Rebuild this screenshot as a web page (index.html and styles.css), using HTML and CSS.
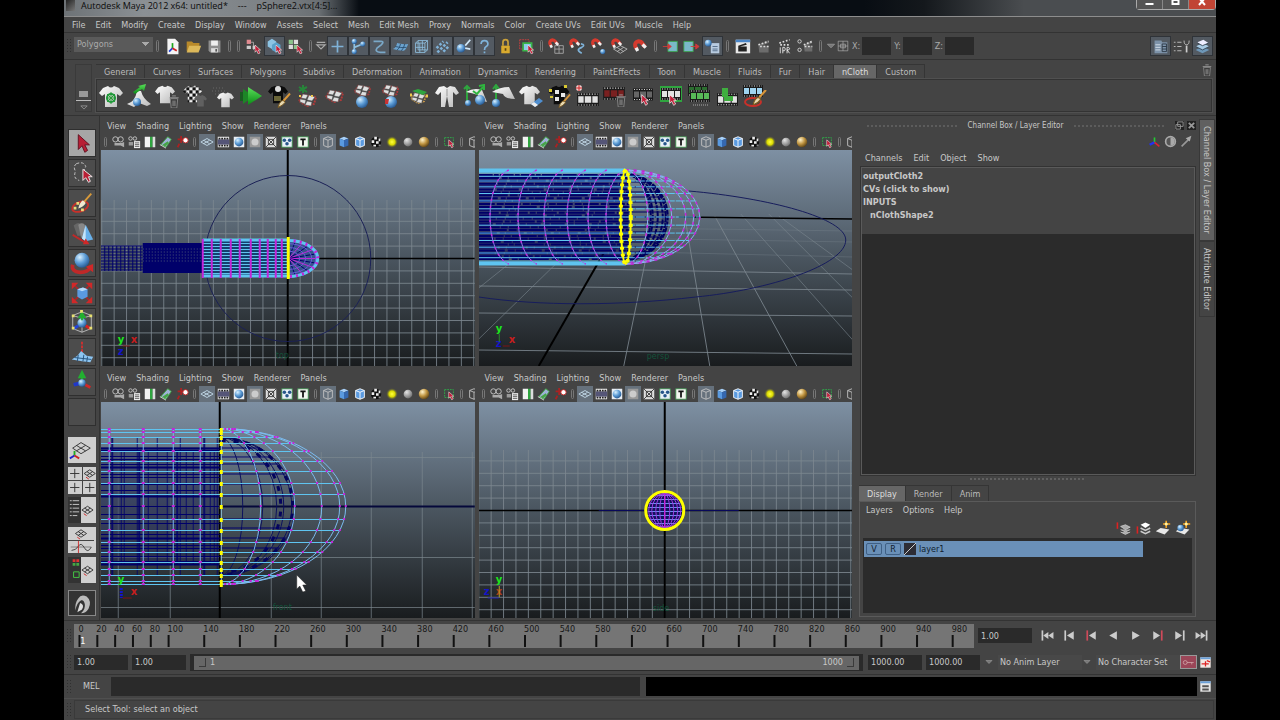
FILE: index.html
```html
<!doctype html>
<html lang="en">
<head>
    <meta charset="utf-8">
    <title>Autodesk Maya 2012 x64: untitled*</title>
    <link rel="stylesheet" href="styles.css">
</head>
<body>
<!-- Shared icon shapes -->
<svg class="sprite" aria-hidden="true">
    <defs>
        <radialGradient id="gBlue" cx=".35" cy=".3" r=".8"><stop offset="0" stop-color="#d8f0ff"/><stop offset=".5" stop-color="#5b9bd5"/><stop offset="1" stop-color="#1d4c85"/></radialGradient>
        <radialGradient id="gGrey" cx=".35" cy=".3" r=".8"><stop offset="0" stop-color="#e4e4e4"/><stop offset="1" stop-color="#666"/></radialGradient>
        <radialGradient id="gGold" cx=".35" cy=".3" r=".8"><stop offset="0" stop-color="#fff3cc"/><stop offset=".5" stop-color="#bf9440"/><stop offset="1" stop-color="#4a3410"/></radialGradient>
        <radialGradient id="gGlow"><stop offset="0" stop-color="#ffff40"/><stop offset=".5" stop-color="#d8d800"/><stop offset="1" stop-color="#444" stop-opacity="0"/></radialGradient>
        <linearGradient id="gCloth" x2="1" y2="1"><stop offset="0" stop-color="#fff"/><stop offset="1" stop-color="#b9b9b9"/></linearGradient>
        <linearGradient id="gGreen" x2="0" y2="1"><stop offset="0" stop-color="#5ae05a"/><stop offset="1" stop-color="#0b8a16"/></linearGradient>
        <pattern id="pCheck" width="8" height="8" patternUnits="userSpaceOnUse"><path fill="#eee" d="M0 0h8v8H0z"/><path fill="#111" d="M0 0h4v4H0zM4 4h4v4H4z"/></pattern>
    </defs>
    <symbol id="p-cursor" viewBox="0 0 12 16"><path d="M1 0v13l3-3 3 6 3-2-3-5h4z" fill="#c2203a" stroke="#fff" stroke-width="1"/></symbol>
    <symbol id="p-shirt" viewBox="0 0 24 24"><path d="M4 4l5-2q3 3 6 0l5 2 4 5-3 3-3-2v13H6V10l-3 2-3-3z"/></symbol>
    <symbol id="p-trash" viewBox="0 0 10 14"><path d="M1 4h8l-1 10H2z" fill="#3c3c3c" stroke="#888" stroke-width="1"/><path d="M0 3h10M3 1h4M4 6v6M6 6v6" stroke="#999" fill="none"/></symbol>
    <symbol id="p-brush" viewBox="0 0 14 14"><path d="M13 0L5 9" stroke="#d8963a" stroke-width="2"/><path d="M5 7q3 0 3 2-2 3-7 5 1-5 4-7z" fill="#e8d9b0" stroke="#7a5a20" stroke-width="1"/></symbol>
    <symbol id="p-film" viewBox="0 0 20 12"><path d="M0 0h20v12H0z" fill="#1b1b1b"/><path d="M1 1h18M1 11h18" stroke="#ddd" stroke-width="1" stroke-dasharray="1 1.5"/><path d="M1 3h5v6H1zM7 3h6v6H7zM14 3h5v6h-5z" fill="currentColor"/></symbol>
    <symbol id="p-mesh" viewBox="0 0 20 14"><path d="M1 8l4-6 13 2-2 7-7 2z" fill="none" stroke="currentColor" stroke-width="2" stroke-dasharray="2 1"/><path d="M5 1l5 1-2 4-5-1zM11 2l6 2-3 4-5-1zM2 6l6 1-1 4-5-2zM9 8l5 1-1 4-6-1z" fill="#e0e0e0" stroke="#444" stroke-width=".5"/></symbol>
    <symbol id="p-magnet" viewBox="0 0 20 20"><path d="M5 13L3 9q-1-5 4-6 3 0 5 3l3 4" fill="none" stroke="#d63a2e" stroke-width="5"/><path d="M4 11l2 4M12 7l4 4" stroke="#eee" stroke-width="4"/></symbol>

    <!-- status line -->
    <symbol id="new" viewBox="0 0 20 20"><path d="M4 1h9l4 4v14H4z" fill="#f4f4f4"/><path d="M10 12V6" stroke="#1aa51a" stroke-width="2"/><path d="M10 12l-4 4" stroke="#2040d8" stroke-width="2"/><path d="M10 12l5 3" stroke="#d02020" stroke-width="2"/></symbol>
    <symbol id="open" viewBox="0 0 20 20"><path d="M2 16V4h6l2 2h7v3" fill="#b8892a"/><path d="M2 17l3-8h14l-3 8z" fill="#dcb85a"/></symbol>
    <symbol id="save" viewBox="0 0 20 20"><path d="M3 3h14v14H5l-2-2z" fill="#8e8e8e"/><path d="M6 3h8v6H6z" fill="#eee"/><path d="M6 12h8v5H6z" fill="#ddd"/><path d="M11 13h2v3h-2z" fill="#555"/></symbol>
    <symbol id="hier" viewBox="0 0 20 20"><path d="M4 5h6v9" stroke="#aaa" fill="none"/><path d="M2 2h5v5H2z" fill="#e08a90"/><path d="M2 9h5v4H2zM9 9h4v4H9z" fill="#ccc"/><use href="#p-cursor" x="11" y="8" width="8" height="11"/></symbol>
    <symbol id="obj" viewBox="0 0 20 20"><path d="M2 4l5-3 5 3v6l-5 3-5-3z" fill="#8cc4e4"/><path d="M7 8l5-3 5 3v6l-5 3-5-3z" fill="#5aa2cc"/><use href="#p-cursor" x="11" y="8" width="8" height="11"/></symbol>
    <symbol id="comp" viewBox="0 0 20 20"><path d="M2 2h5v5H2zM8 8h5v5H8z" fill="#8bc48b"/><path d="M8 2h5v5H8zM2 8h5v5H2z" fill="#ddd"/><use href="#p-cursor" x="11" y="8" width="8" height="11"/></symbol>
    <symbol id="tri" viewBox="0 0 20 20"><path d="M3 4h14M3 8h14l-7 7z" stroke="#aaa" fill="none" stroke-width="2"/></symbol>
    <symbol id="down" viewBox="0 0 20 20"><path d="M4 7h12l-6 6z" fill="#777" stroke="#aaa"/></symbol>
    <symbol id="plus" viewBox="0 0 20 20"><path d="M10 3v14M3 10h14" stroke="#7fb2d8" stroke-width="2"/></symbol>
    <symbol id="joint" viewBox="0 0 20 20"><path d="M5 4v12M5 11l10-4" stroke="#8fc0e0" stroke-width="2"/><g fill="url(#gBlue)"><circle cx="5" cy="4" r="3"/><circle cx="5" cy="16" r="3"/><circle cx="15" cy="7" r="3"/></g></symbol>
    <symbol id="curve" viewBox="0 0 20 20"><path d="M3 4h9q4 0 0 4l-5 4q-3 4 4 5h6" fill="none" stroke="#7aa8c8" stroke-width="2"/></symbol>
    <symbol id="surf" viewBox="0 0 20 20"><path d="M1 13q4-1 5-7 6 2 13 1-2 6-5 8-7 0-13-2z" fill="#6ba3cf"/><path d="M4 10q6 2 13 1M10 7q-1 6-4 7M15 7q-1 5-4 8" stroke="#274a6b" fill="none"/></symbol>
    <symbol id="lattice" viewBox="0 0 20 20"><path d="M3 6h11v11H3zM6 3h11v11H6zM3 11h11M8 6v11M3 6l3-3M14 6l3-3M14 17l3-3M11 3v11" fill="none" stroke="#8fc0e0"/></symbol>
    <symbol id="dots" viewBox="0 0 20 20"><path d="M3 12l8-8M4 17l12-12M11 16l6-6" stroke="#7fb2d8" stroke-width="3" stroke-dasharray="3 2"/></symbol>
    <symbol id="fx" viewBox="0 0 20 20"><circle cx="7" cy="12" r="5" fill="url(#gBlue)"/><path d="M12 9l6-7M12 12l6 1" stroke="#cfe6f7" stroke-width="2"/></symbol>
    <symbol id="help" viewBox="0 0 20 20"><path d="M6 7q0-4 4-4t4 4q0 2-2 3t-2 4M10 16v2" stroke="#7fb2d8" stroke-width="2" fill="none"/></symbol>
    <symbol id="lock" viewBox="0 0 20 20"><path d="M7 9V5q0-3 3-3t3 3v4" stroke="#c9a03a" stroke-width="2" fill="none"/><path d="M5 9h10v9H5z" fill="#d9aa2e"/><path d="M10 12v3" stroke="#5a4210" stroke-width="2"/></symbol>
    <symbol id="hilite" viewBox="0 0 20 20"><path d="M2 2h11v11H2z" fill="none" stroke="#d04040" stroke-dasharray="2 1"/><path d="M6 6h10v9H6z" fill="#8ccce8" stroke="#3ab54a" stroke-width="2"/><use href="#p-cursor" x="11" y="8" width="8" height="11"/></symbol>
    <symbol id="mgrid" viewBox="0 0 20 20"><path d="M8 9h10v9H8zM8 13h10M13 9v9" stroke="#aaa" fill="none"/><use href="#p-magnet" width="15" height="15"/></symbol>
    <symbol id="mcurve" viewBox="0 0 20 20"><path d="M14 7q6 1 1 4-8 3 0 7" stroke="#7fb2d8" fill="none" stroke-width="2"/><use href="#p-magnet" width="15" height="15"/></symbol>
    <symbol id="mpoint" viewBox="0 0 20 20"><circle cx="15" cy="16" r="3" fill="url(#gBlue)"/><use href="#p-magnet" x="1" width="15" height="15"/></symbol>
    <symbol id="mplane" viewBox="0 0 20 20"><path d="M3 13l8-4 8 4-8 5zM7 11l8 5M15 11l-8 5" stroke="#bbb" fill="none"/><use href="#p-magnet" width="15" height="15"/></symbol>
    <symbol id="mlive" viewBox="0 0 20 20"><use href="#p-magnet" x="1" y="1" width="19" height="19"/></symbol>
    <symbol id="inp" viewBox="0 0 20 20"><path d="M7 4h11v12H7z" fill="#7ab8c8" stroke="#3aa54a"/><path d="M1 10h8M7 7l4 3-4 3z" stroke="#d03a3a" fill="#d03a3a" stroke-width="1"/></symbol>
    <symbol id="outp" viewBox="0 0 20 20"><path d="M1 4h11v12H1z" fill="#7ab8c8" stroke="#3aa54a"/><path d="M9 10h8M15 7l4 3-4 3z" stroke="#d03a3a" fill="#d03a3a" stroke-width="1"/></symbol>
    <symbol id="hist" viewBox="0 0 20 20"><path d="M8 6h10v12H8z" fill="#b8cbe0"/><path d="M10 10h6M10 13h6M10 15h6" stroke="#4a6380"/><circle cx="5" cy="6" r="4" fill="url(#gBlue)"/></symbol>
    <symbol id="rview" viewBox="0 0 20 20"><path d="M2 2h17v16H2z" fill="#e8e8e8"/><path d="M2 2h17v3H2z" fill="#4a86c8"/><path d="M5 9l9-3 1 2-8 2h8v6H5z" fill="#222"/></symbol>
    <symbol id="clap" viewBox="0 0 20 20"><path d="M4 8l11-5 1 3-8 3h8v8H5z" fill="#6c6c6c"/><path d="M4 8l12-4M6 10h10" stroke="#ddd" stroke-width="2" stroke-dasharray="2 2"/></symbol>
    <symbol id="ipr" viewBox="0 0 20 20"><path d="M4 6l12-4M5 8h11" stroke="#ddd" stroke-width="2" stroke-dasharray="2 2"/><path d="M5 11v7M8 18v-7h2q2 2 0 4H8M13 18v-7h2q2 2 0 3h-2l3 4" stroke="#eee" fill="none"/></symbol>
    <symbol id="rset" viewBox="0 0 20 20"><path d="M8 8l9-5 1 3-6 3h6v7H9z" fill="#6c6c6c"/><path d="M8 8l10-4M9 10h9" stroke="#ddd" stroke-width="2" stroke-dasharray="2 2"/><g fill="none" stroke="#ddd"><circle cx="3" cy="4" r="2"/><circle cx="3" cy="14" r="2"/></g></symbol>
    <symbol id="abs" viewBox="0 0 20 20"><path d="M2 2h16v16H2zM10 2v16M2 10h16M6 7h8v6H6z" fill="none" stroke="#bbb"/></symbol>
    <symbol id="attr" viewBox="0 0 20 20"><path d="M3 3h8l1 2h6v13H3z" fill="#7d93aa"/><path d="M4 8h6M4 11h6M4 14h6" stroke="#dfe8f2" stroke-width="1"/><path d="M12 7h5v9h-5zM12 10h5M12 13h5" stroke="#26323e" fill="none"/></symbol>
    <symbol id="tools" viewBox="0 0 20 20"><path d="M1 5h2M5 5h5M1 10h2M5 10h5M1 15h2M5 15h5" stroke="#ccc" stroke-width="1"/><path d="M16 9v8" stroke="#ccc" stroke-width="2"/><path d="M13 3q0 5 3 5t3-5" stroke="#ccc" fill="none"/></symbol>
    <symbol id="layers" viewBox="0 0 20 20"><path d="M2 14l8-4 8 4-8 4z" fill="#6d97b8"/><path d="M2 10l8-4 8 4-8 4z" fill="#a9cbe4"/><path d="M4 5l7-3 6 4-7 3z" fill="#eef"/><path d="M2 10l8 4 8-4M4 6l6 3 7-3" fill="none" stroke="#2c3c4c"/></symbol>

    <!-- shelf -->
    <symbol id="s1" viewBox="0 0 24 24"><use href="#p-shirt" fill="url(#gCloth)"/><path d="M12 8v12M8 10l8 8M8 18l8-8M7 14h10" stroke="#2f9a3a" stroke-width="1"/><circle cx="12" cy="14" r="4" fill="none" stroke="#1f9a3a" stroke-width="2"/></symbol>
    <symbol id="s2" viewBox="0 0 24 24"><path d="M10 7Q8 18 0 20l7 3 5-4 8 3 4-2Q16 15 14 7z" fill="url(#gCloth)"/><circle cx="10" cy="18" r="4" fill="url(#gBlue)"/><path d="M6 8l7-5-2-1 8-2-2 7-2-2-7 5z" fill="url(#gGreen)"/></symbol>
    <symbol id="s3" viewBox="0 0 24 24"><use href="#p-shirt" width="20" height="20" fill="url(#gCloth)"/><use href="#p-trash" x="14" y="11" width="10" height="13"/></symbol>
    <symbol id="s4" viewBox="0 0 24 24"><use href="#p-shirt" width="19" height="19" fill="url(#pCheck)"/><use href="#p-shirt" x="11" y="10" width="13" height="13" fill="#606060"/></symbol>
    <symbol id="s5" viewBox="0 0 24 24"><path d="M2 4h12M1 7h14M4 10h9" stroke="#666" stroke-dasharray="1 2"/><use href="#p-shirt" x="6" y="7" width="17" height="17" fill="url(#gCloth)"/></symbol>
    <symbol id="s6" viewBox="0 0 24 24"><path d="M1 8h4v9H1z" fill="#1a5a22"/><path d="M4 5l11 7-11 8z" fill="#1d8527"/><path d="M9 3l14 9-14 9z" fill="url(#gGreen)"/></symbol>
    <symbol id="s7" viewBox="0 0 24 24"><use href="#p-shirt" width="22" height="20" fill="#0c0c0c"/><circle cx="11" cy="5" r="3" fill="#ddd"/><path d="M7 12h7v5H7z" fill="#6b6638"/><use href="#p-brush" x="10" y="9" width="14" height="15"/></symbol>
    <symbol id="s8" viewBox="0 0 24 24"><use href="#p-mesh" color="#b03a3a" x="3" y="9" width="20" height="14"/><path d="M8 1v8M4 3l8 5M4 7l8-4" stroke="#27853a" stroke-width="2"/><path d="M4 12h2M16 12h2" stroke="#ecc84a" stroke-width="2"/></symbol>
    <symbol id="s9" viewBox="0 0 24 24"><use href="#p-mesh" color="#b03a3a" x="2" y="5" width="20" height="14"/></symbol>
    <symbol id="s10" viewBox="0 0 24 24"><use href="#p-mesh" color="#a03a3a" x="2" y="0" width="20" height="13"/><circle cx="11" cy="18" r="6" fill="url(#gBlue)"/></symbol>
    <symbol id="s11" viewBox="0 0 24 24"><use href="#p-mesh" color="#b03a3a" x="2" y="0" width="20" height="13"/><circle cx="12" cy="18" r="6" fill="url(#gBlue)"/><path d="M6 15h4l-1 5H6z" fill="#c83232"/></symbol>
    <symbol id="s12" viewBox="0 0 24 24"><use href="#p-mesh" color="#c8984a" x="3" y="8" width="18" height="12"/><path d="M5 7l6-2 9 3-4 3z" fill="#2fa53f"/><path d="M3 11h2M19 12h2" stroke="#ecc84a" stroke-width="3"/></symbol>
    <symbol id="s13" viewBox="0 0 24 24"><path d="M4 3l5-1 3 2 3-2 5 1 4 6-3 2-3-3 0 15h-4l-2-11-2 11H6V8l-3 3-3-2z" fill="url(#gCloth)"/><path d="M12 5v7" stroke="#999"/></symbol>
    <symbol id="s14" viewBox="0 0 24 24"><path d="M4 2v16M1 5l3-3 3 3" stroke="#2fa53f" stroke-width="2" fill="none"/><path d="M3 8q8-5 16-2l5 12q-7-1-9-7-6-2-12-3z" fill="url(#gCloth)"/><circle cx="5" cy="19" r="3" fill="url(#gBlue)"/><circle cx="17" cy="16" r="5" fill="url(#gBlue)"/><path d="M10 7l4 3 6-7M16 2l5-1v5" stroke="#2fb53f" stroke-width="2" fill="none"/></symbol>
    <symbol id="s15" viewBox="0 0 24 24"><path d="M5 2v16M2 5l3-4 3 4" stroke="#2fa53f" stroke-width="2" fill="none"/><path d="M1 8q8-5 17-5l6 12q-10 0-12-5z" fill="url(#gCloth)"/><circle cx="5" cy="19" r="4" fill="url(#gBlue)"/></symbol>
    <symbol id="s16" viewBox="0 0 24 24"><use href="#p-shirt" width="21" height="21" fill="url(#gCloth)"/><path d="M12 20l8-6 4 3-8 6z" fill="#4f8fd0"/><path d="M12 20l3-2 4 3-3 2z" fill="#eee"/></symbol>
    <symbol id="s17" viewBox="0 0 24 24"><use href="#p-shirt" width="24" height="21" fill="#0c0c0c"/><path d="M8 6h4v4H8zM14 9h4v4h-4zM8 13h4v4H8z" fill="#e8e8e8"/><path d="M2 5h3v3H2zM17 1h3v3h-3zM3 12h3v2H3z" fill="#d8c832"/><use href="#p-brush" x="11" y="10" width="13" height="14"/></symbol>
    <symbol id="s18" viewBox="0 0 24 24"><use href="#p-film" color="#e2e2e2" x="2" y="9" width="22" height="13"/><circle cx="4" cy="4" r="3" fill="#f4d0d0"/><path d="M4 1v6M1 4h6" stroke="#c22"/></symbol>
    <symbol id="s19" viewBox="0 0 24 24"><use href="#p-film" color="#7a2020" x="0" y="3" width="22" height="13"/><use href="#p-trash" x="13" y="10" width="10" height="13"/></symbol>
    <symbol id="s20" viewBox="0 0 24 24"><use href="#p-film" color="#666" x="2" y="4" width="20" height="13"/><use href="#p-cursor" x="10" y="10" width="8" height="12"/></symbol>
    <symbol id="s21" viewBox="0 0 24 24"><path d="M1 2h22v16H1z" fill="#2fa53f"/><use href="#p-film" color="#e2e2e2" x="2" y="4" width="20" height="12"/><use href="#p-cursor" x="10" y="10" width="8" height="12"/></symbol>
    <symbol id="s22" viewBox="0 0 24 24"><use href="#p-film" color="#2c6e30" x="1" y="0" width="20" height="12"/><use href="#p-film" color="#58b858" x="3" y="6" width="20" height="12"/><path d="M6 21h15" stroke="#777" stroke-width="2" stroke-dasharray="1 1"/></symbol>
    <symbol id="s23" viewBox="0 0 24 24"><use href="#p-film" color="#e2e2e2" x="2" y="9" width="21" height="13"/><path d="M7 4h6v8h5v5H9v-4H7z" fill="#3fae3f"/></symbol>
    <symbol id="s24" viewBox="0 0 24 24"><ellipse cx="10" cy="18" rx="8" ry="4" fill="none" stroke="#c8302a" stroke-width="2"/><use href="#p-film" color="#9fd4f0" x="0" y="1" width="20" height="12"/><use href="#p-brush" x="9" y="6" width="15" height="15"/></symbol>

    <!-- panel bar -->
    <symbol id="v-cam" viewBox="0 0 16 16"><circle cx="5" cy="5" r="3" fill="none" stroke="#ccc" stroke-width="1"/><circle cx="11" cy="5" r="3" fill="none" stroke="#ccc"/><path d="M4 9h8l3-1v6l-4-2H4z" fill="#aaa"/></symbol>
    <symbol id="v-camattr" viewBox="0 0 16 16"><circle cx="4" cy="4" r="2" fill="none" stroke="#ccc"/><circle cx="9" cy="4" r="2" fill="none" stroke="#ccc"/><path d="M2 8h5v4H2z" fill="#999"/><path d="M8 7h7v8H8z" fill="#eee"/><path d="M9 9h5M9 11h5M9 13h5" stroke="#555"/></symbol>
    <symbol id="v-book" viewBox="0 0 16 16"><path d="M2 2h6v12H2z" fill="#f2f2f2"/><path d="M8 2h3v12H8z" fill="#2fa53f"/><path d="M11 2h3v12h-3z" fill="#ddd"/></symbol>
    <symbol id="v-img" viewBox="0 0 16 16"><path d="M2 11l8-9 4 3-6 9z" fill="#9fb0d8" stroke="#3fae3f"/><path d="M4 11l6-4 1 2-4 4z" fill="#46a546"/><path d="M1 11l7 4" stroke="#ddd"/></symbol>
    <symbol id="v-zoom" viewBox="0 0 16 16"><path d="M7 1v8M3 5h8M5 10l-2 4" stroke="#a22" stroke-width="2"/><circle cx="12" cy="6" r="3" fill="#fff" stroke="#c22"/></symbol>
    <symbol id="v-grid" viewBox="0 0 16 16"><path d="M1 8l7-4 7 4-7 4zM4 6l7 4M11 6l-7 4" stroke="#c5dbea" fill="none"/></symbol>
    <symbol id="v-film" viewBox="0 0 16 16"><path d="M2 2h13v12H2z" fill="#eee"/><path d="M2 5h13v6H2z" fill="#557"/><path d="M3 4h11M3 12h11" stroke="#222" stroke-width="2" stroke-dasharray="2 1"/></symbol>
    <symbol id="v-res" viewBox="0 0 16 16"><path d="M2 2h12v12H2z" fill="#e8eef4"/><circle cx="8" cy="8" r="5" fill="url(#gBlue)"/></symbol>
    <symbol id="v-gate" viewBox="0 0 16 16"><path d="M2 2h12v12H2z" fill="#999"/><circle cx="8" cy="8" r="4" fill="#ccc"/></symbol>
    <symbol id="v-field" viewBox="0 0 16 16"><path d="M2 2h12v12H2z" fill="#ddd"/><path d="M2 2l12 12M14 2L2 14M5 5h6v6H5z" stroke="#333" fill="none"/></symbol>
    <symbol id="v-safe" viewBox="0 0 16 16"><path d="M2 2h12v12H2z" fill="#e8f0f8" stroke="#3a8a4a"/><circle cx="5" cy="6" r="2" fill="#26558a"/><circle cx="11" cy="6" r="2" fill="#26558a"/><circle cx="8" cy="10" r="2" fill="#26558a"/></symbol>
    <symbol id="v-text" viewBox="0 0 16 16"><path d="M2 2h12v12H2z" fill="#f2f6f0" stroke="#3a8a4a"/><path d="M5 5h6M8 5v7" stroke="#111" stroke-width="2"/></symbol>
    <symbol id="v-wire" viewBox="0 0 16 16"><path d="M3 4l5-2 5 2v8l-5 2-5-2zM3 4l5 2 5-2M8 6v8" fill="none" stroke="#c4c4c4"/></symbol>
    <symbol id="v-shade" viewBox="0 0 16 16"><path d="M3 4l5-2 5 2-5 2z" fill="#a8d0f8"/><path d="M3 4l5 2v8l-5-2z" fill="#5a9ae0"/><path d="M13 4L8 6v8l5-2z" fill="#3568b0"/></symbol>
    <symbol id="v-both" viewBox="0 0 16 16"><path d="M3 4l5-2 5 2v8l-5 2-5-2z" fill="#5a9ae0"/><path d="M3 4l5-2 5 2v8l-5 2-5-2zM3 4l5 2 5-2M8 6v8" fill="none" stroke="#fff"/></symbol>
    <symbol id="v-tex" viewBox="0 0 16 16"><circle cx="8" cy="8" r="6" fill="#111"/><path d="M6 2h3v3H6zM3 6h3v3H3zM8 7h3v3H8zM11 4h2v3h-2zM5 11h3v2H5zM11 11h2v1h-2z" fill="#eee"/></symbol>
    <symbol id="v-light" viewBox="0 0 16 16"><circle cx="8" cy="8" r="7" fill="url(#gGlow)"/></symbol>
    <symbol id="v-grey" viewBox="0 0 16 16"><circle cx="8" cy="8" r="5" fill="url(#gGrey)"/></symbol>
    <symbol id="v-gold" viewBox="0 0 16 16"><circle cx="8" cy="8" r="6" fill="url(#gGold)"/></symbol>
    <symbol id="v-iso" viewBox="0 0 16 16"><path d="M3 3h10v9H3z" fill="none" stroke="#2fb04a" stroke-width="1" stroke-dasharray="2 1"/><use href="#p-cursor" x="7" y="5" width="7" height="10"/></symbol>

    <!-- tool box -->
    <symbol id="t-sel" viewBox="0 0 28 28"><path d="M10 5v16l4-4 3 7 3-2-3-6h5z" fill="#b81f35" stroke="#601020"/></symbol>
    <symbol id="t-lasso" viewBox="0 0 28 28"><path d="M8 4q8-3 10 3l-2 5M8 4q-4 3-1 8-3 8 4 10" fill="none" stroke="#ccc" stroke-dasharray="3 2"/><path d="M15 10v12l3-3 3 5 2-1-2-5h4z" fill="#b81f35" stroke="#eee"/></symbol>
    <symbol id="t-paint" viewBox="0 0 28 28"><ellipse cx="12" cy="18" rx="9" ry="5" fill="none" stroke="#c8302a" stroke-width="2" transform="rotate(-20 12 18)"/><path d="M5 18h3v3H5zM13 20h3v3h-3zM8 13h3v3H8z" fill="#e8d878"/><path d="M24 4l-8 9" stroke="#d89a3a" stroke-width="2"/><path d="M15 11l3 3q-2 4-8 6 1-6 5-9z" fill="#f0e8d0"/></symbol>
    <symbol id="t-move" viewBox="0 0 28 28"><path d="M5 6q5-5 8-1l3 12H9z" fill="#666"/><path d="M10 5q4-3 7 0l2 14h-6z" fill="#888"/><path d="M18 5l8 16-8 2-4-3z" fill="#68b0ea"/><path d="M18 5l0 18-4-3z" fill="#c4e4fa"/><path d="M4 16l13 8" stroke="#c02828" stroke-width="2"/><path d="M15 26h7l-4-6z" fill="#d02828"/></symbol>
    <symbol id="t-rot" viewBox="0 0 28 28"><path d="M4 16q-2 7 8 8 8 0 11-5" stroke="#c02828" stroke-width="4" fill="none"/><path d="M18 18l8-3v9z" fill="#d02828"/><circle cx="14" cy="11" r="8" fill="url(#gBlue)"/></symbol>
    <symbol id="t-scale" viewBox="0 0 28 28"><path d="M4 4l8 8M24 4l-8 8M4 24l8-8M24 24l-8-8" stroke="#a82828" stroke-width="2"/><path d="M3 3h7l-7 7zM25 3h-7l7 7zM3 25h7l-7-7zM25 25h-7l7-7z" fill="#d02828"/><path d="M9 10l6-2 5 2v8l-6 3-5-3z" fill="#5a9ae0"/><path d="M9 10l6-2 5 2-6 2z" fill="#b8dcfa"/></symbol>
    <symbol id="t-manip" viewBox="0 0 28 28"><path d="M4 7l10-4 10 4v14l-10 4-10-4zM4 7l10 3 10-3M14 10v15" stroke="#bbb" fill="none"/><circle cx="14" cy="15" r="5" fill="url(#gBlue)"/><path d="M14 4v8M11 9l3-5 3 5z" stroke="#22b030" stroke-width="2" fill="#22b030"/><path d="M18 18l5 3" stroke="#d22" stroke-width="3"/><path d="M10 18l-5 3" stroke="#24d" stroke-width="3"/><path d="M3 6h3v3H3zM22 6h3v3h-3zM3 19h3v3H3zM22 19h3v3h-3zM12 1h3v3h-3z" fill="#e8e070"/></symbol>
    <symbol id="t-soft" viewBox="0 0 28 28"><path d="M14 3v12" stroke="#d03030" stroke-width="2" stroke-dasharray="3 1"/><path d="M3 22l6-4 4-5 6 5 7 1-3 6-9-1z" fill="#8cc4f0"/><path d="M6 20l18 2M10 17l-1 7M16 17l-1 7M20 19l-1 6" stroke="#24507a" fill="none"/></symbol>
    <symbol id="t-axis" viewBox="0 0 28 28"><path d="M14 15V5M11 9l3-6 3 6z" stroke="#22b030" stroke-width="2" fill="#22b030"/><path d="M14 15l9 5" stroke="#d02828" stroke-width="3"/><path d="M14 15l-9 2" stroke="#2038c8" stroke-width="4"/><circle cx="14" cy="15" r="4" fill="url(#gBlue)"/></symbol>
    <symbol id="l-diamond" viewBox="0 0 28 28"><path d="M5 12l9-6 10 6-10 6zM9 9l10 6M19 9l-10 6" fill="none" stroke="#333" stroke-width="1"/><path d="M7 20v-5" stroke="#2a2" stroke-width="2"/><path d="M7 20l-5 3" stroke="#22c" stroke-width="2"/><path d="M7 20l5 3" stroke="#c22" stroke-width="2"/></symbol>
    <symbol id="l-eye" viewBox="0 0 14 14"><path d="M1 7l6-4 6 4-6 4zM4 5l6 4M10 5L4 9" fill="none" stroke="#333"/><path d="M3 11l3 2" stroke="#c22"/></symbol>
    <symbol id="l-cross" viewBox="0 0 14 14"><path d="M7 2v10M2 7h10" stroke="#333"/></symbol>
    <symbol id="l-list" viewBox="0 0 14 28"><path d="M0 0h14v28H0z" fill="#333"/><path d="M2 4h2M5 4h7M2 8h2M5 8h7M2 12h2M5 12h7M2 16h2M5 16h7M2 20h2M5 20h5" stroke="#ccc"/></symbol>
    <symbol id="l-graph" viewBox="0 0 28 14"><path d="M2 7h24" stroke="#777"/><path d="M3 11q5 0 8-5t7 2 8-1" fill="none" stroke="#333"/><path d="M11 0v14" stroke="#c22"/></symbol>
    <symbol id="l-hyper" viewBox="0 0 14 28"><path d="M0 0h14v28H0z" fill="#333"/><path d="M5 4h3M9 4h3" stroke="#d33" stroke-width="3"/><path d="M5 8h3M9 8h3" stroke="#4a4" stroke-width="3"/><path d="M6 16h6v6H6z" fill="none" stroke="#4c4" stroke-width="1"/></symbol>
    <symbol id="l-maya" viewBox="0 0 28 28"><path d="M10 8q3-5 9-2 6 5 2 13-3 5-8 5 5-5 4-10t-4-4q-5 3-6 11-1-8 3-13z" fill="#bbb"/><path d="M12 13q5 2 2 7-3 2-5 3 1-4 3-10z" fill="#ddd"/></symbol>

    <!-- playback -->
    <symbol id="k-start" viewBox="0 0 20 20"><path d="M4 4v12" stroke="#ccc" stroke-width="2"/><path d="M11 6v8l-6-4zM17 6v8l-6-4z" fill="#ccc"/></symbol>
    <symbol id="k-prev" viewBox="0 0 20 20"><path d="M5 4v12" stroke="#ccc" stroke-width="2"/><path d="M15 5v10l-8-5z" fill="#ccc"/></symbol>
    <symbol id="k-prevkey" viewBox="0 0 20 20"><path d="M5 4v12" stroke="#d04a5a" stroke-width="2"/><path d="M15 5v10l-8-5z" fill="#ccc"/></symbol>
    <symbol id="k-back" viewBox="0 0 20 20"><path d="M14 5v10l-9-5z" fill="#ccc"/></symbol>
    <symbol id="k-play" viewBox="0 0 20 20"><path d="M6 5v10l9-5z" fill="#ccc"/></symbol>
    <symbol id="k-nextkey" viewBox="0 0 20 20"><path d="M15 4v12" stroke="#d04a5a" stroke-width="2"/><path d="M5 5v10l8-5z" fill="#ccc"/></symbol>
    <symbol id="k-next" viewBox="0 0 20 20"><path d="M15 4v12" stroke="#ccc" stroke-width="2"/><path d="M5 5v10l8-5z" fill="#ccc"/></symbol>
    <symbol id="k-end" viewBox="0 0 20 20"><path d="M16 4v12" stroke="#ccc" stroke-width="2"/><path d="M3 6v8l6-4zM9 6v8l6-4z" fill="#ccc"/></symbol>

    <!-- side panel and bottom bars -->
    <symbol id="c-axis" viewBox="0 0 16 16"><path d="M8 9V3" stroke="#2c3" stroke-width="2"/><path d="M8 9l-6 3" stroke="#23e" stroke-width="3"/><path d="M8 9l6 5" stroke="#d23" stroke-width="2"/></symbol>
    <symbol id="c-half" viewBox="0 0 16 16"><circle cx="8" cy="8" r="6" fill="#555" stroke="#aaa" stroke-width="2"/><path d="M8 3a5 5 0 0 1 0 10z" fill="#aaa"/></symbol>
    <symbol id="c-arrow" viewBox="0 0 16 16"><path d="M2 14L11 5" stroke="#999" stroke-width="2"/><path d="M7 4l7-3-2 7z" fill="#aaa"/></symbol>
    <symbol id="y-up" viewBox="0 0 20 20"><path d="M3 3v8" stroke="#d22" stroke-width="2"/><path d="M7 8l6-2 6 3-6 3zM7 12l6 3 6-3M7 15l6 3 6-3" fill="#aaa" stroke="#ccc"/></symbol>
    <symbol id="y-down" viewBox="0 0 20 20"><path d="M3 8v9" stroke="#d22" stroke-width="2"/><path d="M7 6l6-3 6 3-6 4z" fill="#fff"/><path d="M7 10l6 3 6-3M7 14l6 3 6-3" fill="none" stroke="#ccc" stroke-width="2"/></symbol>
    <symbol id="y-new" viewBox="0 0 20 20"><path d="M1 14l6-4 11 2-6 6z" fill="#e8e8e8"/><path d="M14 1v9M10 5h9" stroke="#f0a020" stroke-width="2"/><circle cx="14" cy="5" r="2" fill="#fff2a0"/></symbol>
    <symbol id="y-newsel" viewBox="0 0 20 20"><path d="M1 14l6-4 11 2-6 6z" fill="#e8e8e8"/><circle cx="7" cy="10" r="4" fill="url(#gBlue)"/><path d="M14 1v9M10 5h9" stroke="#f0a020" stroke-width="2"/><circle cx="14" cy="5" r="2" fill="#fff2a0"/></symbol>
    <symbol id="b-key" viewBox="0 0 20 20"><circle cx="5" cy="10" r="3" fill="none" stroke="#dbb"/><path d="M8 10h10M15 10v3" stroke="#dbb" stroke-width="1"/></symbol>
    <symbol id="b-pref" viewBox="0 0 20 20"><path d="M2 2h16v16H2z" fill="#f2e8e4"/><path d="M2 2h16v3H2z" fill="#6aa0d8"/><path d="M4 12h11M10 8v8M12 7l5 2" stroke="#d22" stroke-width="2"/></symbol>
    <symbol id="b-script" viewBox="0 0 20 20"><path d="M2 2h16v16H2z" fill="#e8e8e8"/><path d="M2 2h16v3H2z" fill="#6aa0d8"/><path d="M5 8h10v3H5zM5 13h10v3H5z" fill="#555"/></symbol>
</svg>

<div class="app">
    <header class="titlebar">
        <span class="app-logo"></span>
        <span class="title">Autodesk Maya 2012 x64: untitled*</span>
        <span class="title">---</span>
        <span class="title">pSphere2.vtx[4:5]...</span>
        <div class="window-buttons">
            <button type="button" class="win" aria-label="Minimize"><svg viewBox="0 0 20 9"><path d="M6 3h8v2H6z" fill="#fff"/></svg></button>
            <button type="button" class="win" aria-label="Maximize"><svg viewBox="0 0 20 9"><path d="M7 0h6v4H7z" fill="none" stroke="#fff" stroke-width="2"/></svg></button>
            <button type="button" class="win close" aria-label="Close"><svg viewBox="0 0 20 9"><path d="M7-2l6 7M13-2L7 5" stroke="#fff" stroke-width="2"/></svg></button>
        </div>
    </header>

    <nav class="menu menubar" data-menu="File,Edit,Modify,Create,Display,Window,Assets,Select,Mesh,Edit Mesh,Proxy,Normals,Color,Create UVs,Edit UVs,Muscle,Help"></nav>

    <!-- Status line -->
    <div class="status-line">
        <span class="grip"></span>
        <select class="mode" aria-label="Menu set"><option>Polygons</option></select>
        <div class="icons" data-icons="|,new,open,save,|,|,hier,obj*,comp,|,tri-,plus*,joint*,curve*,surf*,lattice*,dots*,fx*,help*,lock,hilite,|,mgrid,mcurve,mpoint,mplane,mlive,|,inp,outp,hist*,|,rview,clap,ipr,rset,|,down-,abs-"></div>
        <label class="coord">X:<input type="text"></label>
        <label class="coord">Y:<input type="text"></label>
        <label class="coord">Z:<input type="text"></label>
        <div class="icons right" data-icons="attr*,tools,layers*"></div>
    </div>

    <!-- Shelf -->
    <div class="shelf">
        <div class="shelf-side">
            <button type="button" class="shelf-tab-btn" aria-label="Shelf tabs"></button>
            <button type="button" class="shelf-menu-btn" aria-label="Shelf menu"><svg viewBox="0 0 10 6"><path d="M1 1h8L5 5z" fill="none" stroke="#999"/></svg></button>
        </div>
        <div class="shelf-main">
            <div class="tabs shelf-tabs" data-tabs="General,Curves,Surfaces,Polygons,Subdivs,Deformation,Animation,Dynamics,Rendering,PaintEffects,Toon,Muscle,Fluids,Fur,Hair,nCloth*,Custom">
                <button type="button" class="trash" aria-label="Delete"><svg><use href="#p-trash"/></svg></button>
            </div>
            <div class="shelf-icons" data-icons="s1,s2,s3,s4,s5,s6,s7,s8,s9,s10,s11,s12,s13,s14,s15,s16,s17,s18,s19,s20,s21,s22,s23,s24"></div>
        </div>
    </div>

    <main class="workspace">
        <!-- Tool box -->
        <div class="toolbox">
            <div class="tools">
                <button type="button" class="tool on" aria-label="Select"><svg><use href="#t-sel"/></svg></button>
                <button type="button" class="tool" aria-label="Lasso"><svg><use href="#t-lasso"/></svg></button>
                <button type="button" class="tool" aria-label="Paint select"><svg><use href="#t-paint"/></svg></button>
                <button type="button" class="tool" aria-label="Move"><svg><use href="#t-move"/></svg></button>
                <button type="button" class="tool" aria-label="Rotate"><svg><use href="#t-rot"/></svg></button>
                <button type="button" class="tool" aria-label="Scale"><svg><use href="#t-scale"/></svg></button>
                <button type="button" class="tool" aria-label="Manipulator"><svg><use href="#t-manip"/></svg></button>
                <button type="button" class="tool" aria-label="Soft modification"><svg><use href="#t-soft"/></svg></button>
                <button type="button" class="tool" aria-label="Show manipulator"><svg><use href="#t-axis"/></svg></button>
                <button type="button" class="tool" aria-label="Last tool"></button>
            </div>
            <div class="layouts">
                <button type="button" class="layout" aria-label="Single view"><svg><use href="#l-diamond"/></svg></button>
                <button type="button" class="layout four" aria-label="Four view"><svg><use href="#l-cross"/></svg><svg><use href="#l-eye"/></svg><svg><use href="#l-cross"/></svg><svg><use href="#l-cross"/></svg></button>
                <button type="button" class="layout two" aria-label="Outliner"><svg><use href="#l-list"/></svg><svg><use href="#l-eye"/></svg></button>
                <button type="button" class="layout stack" aria-label="Graph"><svg><use href="#l-eye"/></svg><svg><use href="#l-graph"/></svg></button>
                <button type="button" class="layout two" aria-label="Hypershade"><svg><use href="#l-hyper"/></svg><svg><use href="#l-eye"/></svg></button>
                <button type="button" class="layout maya" aria-label="Maya"><svg><use href="#l-maya"/></svg></button>
            </div>
        </div>

        <!-- Viewports, filled in by script.js -->
        <div class="viewports">
            <section class="panel" data-view="top"></section>
            <section class="panel" data-view="persp"></section>
            <section class="panel" data-view="front"></section>
            <section class="panel" data-view="side"></section>
        </div>

        <!-- Channel box / layer editor -->
        <aside class="side">
            <div class="side-title">
                <span class="dots"></span>
                <span>Channel Box / Layer Editor</span>
                <span class="dots"></span>
                <button type="button" class="dock" aria-label="Float"><svg viewBox="0 0 10 10"><path d="M3 1h6v5H3zM1 4h5v5H1z" fill="#222" stroke="#999"/></svg></button>
                <button type="button" class="dock" aria-label="Close"><svg viewBox="0 0 10 10"><path d="M2 2l6 6M8 2L2 8" stroke="#999" stroke-width="2"/></svg></button>
            </div>
            <div class="side-icons" data-icons="c-axis,c-half,c-arrow"></div>
            <nav class="menu side-menu" data-menu="Channels,Edit,Object,Show"></nav>
            <div class="channels">
                <ul class="channel-list">
                    <li>outputCloth2</li>
                    <li>CVs (click to show)</li>
                    <li>INPUTS</li>
                    <li class="child">nClothShape2</li>
                </ul>
            </div>
            <div class="splitter"></div>
            <div class="tabs layer-tabs" data-tabs="Display*,Render,Anim"></div>
            <div class="layer-editor">
                <nav class="menu layer-menu" data-menu="Layers,Options,Help"></nav>
                <div class="layer-icons" data-icons="y-up,y-down,y-new,y-newsel"></div>
                <div class="layer-list">
                    <div class="layer">
                        <button type="button" class="flag">V</button>
                        <button type="button" class="flag">R</button>
                        <svg class="swatch" viewBox="0 0 12 12"><path d="M0 0h12v12H0z" fill="#2d2d35"/><path d="M0 12L12 0" stroke="#ccc"/></svg>
                        <span>layer1</span>
                    </div>
                </div>
            </div>
        </aside>
        <div class="side-tabs">
            <button type="button" class="side-tab on">Channel Box / Layer Editor</button>
            <button type="button" class="side-tab">Attribute Editor</button>
        </div>
    </main>

    <!-- Time slider -->
    <div class="row time-row">
        <span class="grip"></span>
        <svg class="timeline" id="timeline"></svg>
        <input type="text" class="field" value="1.00" aria-label="Current time">
        <div class="playback" data-icons="k-start,k-prev,k-prevkey,k-back,k-play,k-nextkey,k-next,k-end"></div>
    </div>

    <!-- Range slider -->
    <div class="row range-row">
        <span class="grip"></span>
        <input type="text" class="field" value="1.00" aria-label="Start time">
        <input type="text" class="field" value="1.00" aria-label="Playback start">
        <div class="range"><div class="range-bar"><i></i><span>1</span><span class="range-end">1000</span><i></i></div></div>
        <input type="text" class="field" value="1000.00" aria-label="Playback end">
        <input type="text" class="field" value="1000.00" aria-label="End time">
        <svg class="drop"><use href="#down"/></svg>
        <select class="plain" aria-label="Anim layer"><option>No Anim Layer</option></select>
        <svg class="drop"><use href="#down"/></svg>
        <select class="plain" aria-label="Character set"><option>No Character Set</option></select>
        <button type="button" class="small key" aria-label="Auto key"><svg><use href="#b-key"/></svg></button>
        <button type="button" class="small" aria-label="Preferences"><svg><use href="#b-pref"/></svg></button>
    </div>

    <!-- Command line -->
    <div class="row cmd-row">
        <span class="grip"></span>
        <label class="mel" for="mel">MEL</label>
        <input type="text" class="cmd" id="mel">
        <input type="text" class="result" aria-label="Result" readonly>
        <button type="button" class="small" aria-label="Script editor"><svg><use href="#b-script"/></svg></button>
    </div>

    <footer class="row help-row">
        <span class="grip"></span>
        <p class="help-line">Select Tool: select an object</p>
    </footer>
</div>
<script src="script.js"></script>
</body>
</html>
```
FILE: styles.css
```css
* {
    box-sizing: border-box;
}
body {
    margin: 0;
    background-color: #000;
    color: #c8c8c8;
    font-family: "DejaVu Sans Condensed", "Noto Sans", sans-serif;
    font-size: 9px;
    line-height: 13px;
}
button, input, select {
    font: inherit;
    color: inherit;
    margin: 0;
    padding: 0;
    border: 0;
    background: none;
    border-radius: 0;
    min-width: 0;
}
select {
    appearance: none;
}
button {
    flex: none;
}
svg {
    display: block;
}
.sprite {
    position: absolute;
    width: 0;
    height: 0;
}
.app {
    display: flex;
    flex-direction: column;
    height: 100vh;
    margin: 0 5%;
    background-color: #444;
    overflow: hidden;
}
.grip {
    flex: none;
    width: 6px;
    height: 16px;
    margin: 0 2px;
    background-image: radial-gradient(#303030 1px, transparent 1px);
    background-size: 3px 3px;
}

/* title bar */
.titlebar {
    flex: none;
    display: flex;
    gap: 10px;
    height: 17px;
    padding-left: 2px;
    border-bottom: 1px solid #8d8d8d;
    background: linear-gradient(to right, #6d7276 0, #8b9094 80px, #7d8286 200px, #6a6f73 255px, #080d13 295px, #080d13 800px, #14181c 860px, #4a4d50 960px);
    color: #0b0b0b;
    font-family: "Open Sans", sans-serif;
    font-size: 9px;
    line-height: 12px;
}
.title {
    white-space: nowrap;
}
.app-logo {
    width: 9px;
    height: 11px;
    margin-right: -4px;
    background: linear-gradient(135deg, #222, #777);
}
.window-buttons {
    display: flex;
    margin-left: auto;
    height: 10px;
    border: 1px solid #aaa;
    border-top: 0;
    border-radius: 0 0 4px 4px;
}
.win {
    width: 26px;
    border-right: 1px solid #888;
    background-color: #555;
}
.win svg {
    width: 100%;
    height: 9px;
}
.close {
    border: 0;
    background-color: #c14434;
}

/* menus */
.menu {
    display: flex;
    gap: 10px;
}
.menu button {
    white-space: nowrap;
}
.menubar {
    flex: none;
    height: 16px;
    padding: 2px 8px 0;
    border-bottom: 1px solid #333;
}

/* status line */
.status-line {
    flex: none;
    display: flex;
    align-items: center;
    height: 27px;
    border-bottom: 1px solid #333;
    overflow: hidden;
}
.mode {
    flex: none;
    width: 79px;
    height: 15px;
    padding-left: 3px;
    margin-bottom: 4px;
    color: #aaa;
    background: linear-gradient(45deg, transparent 50%, #aaa 50%) 68px 5px / 4px 4px no-repeat, linear-gradient(-45deg, transparent 50%, #aaa 50%) 72px 5px / 4px 4px no-repeat, #5a5a5a;
}
.icons {
    display: flex;
    align-items: center;
}
.icons button {
    display: grid;
    place-items: center;
    width: 21px;
    height: 20px;
}
.icons .narrow {
    width: 12px;
}
.icons svg {
    width: 17px;
    height: 17px;
}
.icons .narrow svg {
    width: 12px;
    height: 12px;
}
.icons .on {
    background-color: #535a62;
    border: 1px solid #2f3338;
}
.sep {
    flex: none;
    width: 3px;
    height: 12px;
    margin: 0 3px;
    border: 1px solid #777;
    border-radius: 2px;
}
.coord {
    display: flex;
    align-items: center;
    gap: 2px;
    margin-left: 3px;
    color: #aaa;
}
.coord input {
    width: 29px;
    height: 18px;
    background-color: #2a2a2a;
}
.right {
    margin: 0 3px 0 auto;
}

/* shelf */
.shelf {
    flex: none;
    display: flex;
    height: 56px;
    padding: 4px 4px 3px 11px;
    border-bottom: 1px solid #333;
}
.shelf-side {
    display: flex;
    flex-direction: column;
    justify-content: flex-end;
    align-items: center;
    width: 17px;
    margin-right: 4px;
    border: 1px solid #3a3a3a;
}
.shelf-tab-btn {
    width: 9px;
    height: 6px;
    margin-bottom: 3px;
    background-color: #999;
}
.shelf-menu-btn {
    width: 100%;
    padding: 4px 3px 1px;
    border-top: 1px solid #bbb;
}
.shelf-menu-btn svg {
    width: 8px;
    height: 5px;
    margin: 0 auto;
}
.shelf-main {
    flex: 1;
    display: flex;
    flex-direction: column;
    min-width: 0;
}
.tabs {
    display: flex;
}
.tabs .tab {
    height: 15px;
    padding: 0 8px;
    border: 1px solid #353535;
    border-width: 1px 1px 0 0;
    color: #bbb;
}
.tabs .on {
    background-color: #666;
    color: #ddd;
}
.trash {
    width: 10px;
    height: 12px;
    margin-left: auto;
    order: 1;
}
.trash svg {
    width: 10px;
    height: 12px;
}
.shelf-icons {
    flex: 1;
    display: flex;
    align-items: center;
    border: 1px solid #333;
    outline: 1px solid #505050;
    overflow: hidden;
}
.shelf-icons button {
    width: 28px;
    padding: 0 2px;
}
.shelf-icons svg {
    width: 24px;
    height: 24px;
}

/* workspace */
.workspace {
    flex: 1;
    display: grid;
    grid-template-columns: 36px minmax(0, 1fr) 345px 18px;
    min-height: 0;
}
.toolbox {
    display: flex;
    flex-direction: column;
    gap: 11px;
    min-height: 0;
    padding: 13px 3px 4px 4px;
    border-right: 1px solid #333;
}
.tools {
    flex: 1;
    display: flex;
    flex-direction: column;
    gap: 2px;
    min-height: 0;
}
.tool {
    flex: 1;
    min-height: 0;
    border: 1px solid #2f2f2f;
    background-color: #4c4c4c;
}
.tool svg {
    width: 26px;
    height: 26px;
}
.tool.on {
    background-color: #a6a6a6;
}
.layouts {
    display: flex;
    flex-direction: column;
    gap: 4px;
}
.layout {
    height: 26px;
    background-color: #cfcfcf;
}
.layout svg {
    width: 26px;
    height: 26px;
}
.four {
    display: grid;
    grid-template-columns: 1fr 1fr;
    gap: 1px;
    background-color: #444;
}
.four svg {
    width: 100%;
    height: 13px;
    background-color: #cfcfcf;
}
.two {
    display: flex;
}
.two svg {
    width: 13px;
}
.stack svg {
    height: 13px;
}
.stack svg + svg {
    border-top: 1px solid #444;
}
.maya {
    margin-top: 3px;
    border: 1px solid #888;
    background-color: #333;
}

/* viewports */
.viewports {
    display: grid;
    grid-template-columns: 1fr 1fr;
    grid-template-rows: 1fr 1fr;
    column-gap: 4px;
    padding: 0 1px;
    min-height: 0;
}
.panel {
    display: flex;
    flex-direction: column;
    min-width: 0;
    min-height: 0;
    padding: 4px 0 2px;
}
.panel .menu {
    flex: none;
    height: 13px;
    padding-left: 6px;
}
.panel-icons {
    flex: none;
    display: flex;
    align-items: center;
    height: 17px;
    overflow: hidden;
}
.panel-icons .sep {
    height: 10px;
}
.panel-icons svg {
    width: 16px;
    height: 16px;
    padding: 1px;
}
.panel-icons .on {
    background-color: #66717c;
}
.view {
    flex: 1;
    width: 100%;
    min-height: 0;
    background: linear-gradient(#7e90a3, #4a555f 50%, #191c1e);
}
.view text {
    font-family: "DejaVu Sans", sans-serif;
    font-size: 10px;
    font-weight: bold;
}
.view .camera {
    font-size: 8px;
    font-weight: normal;
    fill: #14513a;
}

/* channel box */
.side {
    display: flex;
    flex-direction: column;
    padding: 3px 2px 3px 6px;
    min-height: 0;
}
.side-title {
    display: flex;
    align-items: center;
    justify-content: flex-end;
    gap: 3px;
    height: 13px;
    font-size: 8px;
    white-space: nowrap;
}
.dots {
    width: 100px;
    height: 4px;
    margin: 0 7px;
    background-image: radial-gradient(#5c5c5c 1px, transparent 1px);
    background-size: 4px 4px;
}
.dock {
    width: 9px;
    height: 9px;
    background-color: #222;
}
.side-icons {
    display: flex;
    justify-content: flex-end;
    align-items: center;
    height: 18px;
}
.side-icons button {
    width: 16px;
}
.side-icons svg {
    width: 13px;
    height: 13px;
}
.side-menu {
    gap: 11px;
    height: 17px;
    padding: 0 6px;
}
.channels {
    flex: 1;
    min-height: 0;
    margin: 0 1px 0 2px;
    border: 1px solid #5a5a5a;
    outline: 1px solid #333;
    background-color: #2b2b2b;
}
.channel-list {
    margin: 0;
    padding: 2px 1px 12px;
    list-style: none;
    font-weight: bold;
    background-color: #444;
}
.child {
    padding-left: 7px;
}
.splitter {
    height: 10px;
    margin: 0 110px;
    background: radial-gradient(#606060 1px, transparent 1px) 0 2px / 4px 4px repeat-x;
}
.layer-tabs .tab {
    height: 16px;
    line-height: 16px;
}
.layer-editor {
    flex: none;
    display: flex;
    flex-direction: column;
    height: 116px;
    padding: 2px 3px 3px;
    border: 1px solid #5a5a5a;
}
.layer-menu {
    padding-left: 3px;
}
.layer-icons {
    display: flex;
    justify-content: flex-end;
    gap: 4px;
    height: 21px;
    padding: 3px 1px;
}
.layer-icons svg {
    width: 16px;
    height: 16px;
}
.layer-list {
    flex: 1;
    padding: 3px 0 0 1px;
    background-color: #2b2b2b;
}
.layer {
    display: flex;
    align-items: center;
    gap: 3px;
    width: 85%;
    height: 16px;
    padding-left: 2px;
    background-color: #6a90b8;
    color: #10202e;
}
.flag {
    width: 16px;
    height: 12px;
    line-height: 10px;
    border: 1px solid #3f6085;
    border-radius: 2px;
}
.swatch {
    width: 12px;
    height: 12px;
}
.side-tabs {
    display: flex;
    flex-direction: column;
    align-items: stretch;
    padding: 3px 1px 0;
}
.side-tab {
    writing-mode: vertical-rl;
    padding: 6px 0;
    border: 1px solid #383838;
    line-height: 14px;
}
.side-tab.on {
    background-color: #606060;
}

/* bottom rows */
.row {
    flex: none;
    display: flex;
    align-items: center;
    padding-right: 2px;
}
.field {
    flex: none;
    width: 54px;
    height: 15px;
    margin-right: 4px;
    padding-left: 3px;
    background-color: #2a2a2a;
}
.time-row {
    height: 30px;
    padding-right: 4px;
    border-top: 1px solid #333;
}
.timeline {
    flex: 1;
    min-width: 0;
    height: 24px;
    margin-right: 4px;
    background-color: #757575;
}
.timeline text {
    font-size: 9px;
    fill: #151515;
}
.timeline .now {
    fill: #fff;
}
.playback {
    display: flex;
}
.playback button {
    width: 22px;
    padding: 0 3px;
}
.playback svg {
    width: 17px;
    height: 17px;
}
.range-row {
    height: 25px;
    border-bottom: 1px solid #333;
}
.range {
    flex: 1;
    height: 17px;
    margin-right: 5px;
    padding: 2px 4px 1px;
    background-color: #2a2a2a;
}
.range-bar {
    display: flex;
    align-items: center;
    gap: 4px;
    height: 14px;
    padding: 0 5px;
    background-color: #666;
}
.range-bar i {
    width: 7px;
    height: 9px;
    border: 1px solid #3a3a3a;
    border-width: 0 1px 1px 0;
}
.range-end {
    margin-left: auto;
}
.drop {
    width: 10px;
    height: 10px;
    margin-right: 4px;
}
.plain {
    width: 84px;
    height: 15px;
    padding-left: 2px;
    background-color: #484848;
}
.small {
    width: 17px;
    height: 14px;
}
.small svg {
    width: 13px;
    height: 13px;
    margin: 0 auto;
}
.key {
    border: 1px solid #999;
    background-color: #9b4658;
}
.cmd-row {
    height: 23px;
}
.mel {
    width: 37px;
    padding-left: 9px;
}
.cmd {
    flex: 530;
    height: 19px;
    margin-right: 6px;
    background-color: #2a2a2a;
}
.result {
    flex: 553;
    height: 19px;
    background-color: #000;
}
.help-row {
    height: 22px;
    border-top: 1px solid #4f4f4f;
}
.help-line {
    flex: 1;
    margin: 0;
    padding: 2px 10px;
    border: 1px solid #3a3a3a;
}
```
FILE: script.js
```javascript
const menuNames = 'View,Shading,Lighting,Show,Renderer,Panels';
const panelIcons = '|,v-cam,v-camattr,v-book,v-img,v-zoom,|,v-grid*,v-film,v-res,v-gate*,v-field,v-safe,v-text,|,v-wire*,v-shade,v-both,v-tex,v-light,v-grey,v-gold,|,v-iso,|,v-wire';

// name* = pressed, name- = narrow, | = separator
function iconHtml(list) {
    return list.split(',').map(name => {
        if (name === '|') return '<span class="sep"></span>';
        const id = name.replace(/[*-]$/, '');
        const cls = name.endsWith('*') ? 'on' : name.endsWith('-') ? 'narrow' : '';
        return `<button type="button" class="${cls}" aria-label="${id}"><svg><use href="#${id}"/></svg></button>`;
    }).join('');
}

function menuHtml(list) {
    return list.split(',').map(name => `<button type="button">${name}</button>`).join('');
}

// svg helpers
const line = (x1, y1, x2, y2, color, w = 1, extra = '') =>
    `<path d="M${x1} ${y1}L${x2} ${y2}" stroke="${color}" stroke-width="${w}" fill="none" ${extra}/>`;
const path = (d, color, w = 1, extra = '') =>
    `<path d="${d}" stroke="${color}" stroke-width="${w}" fill="none" ${extra}/>`;
// right half of an ellipse
const arc = (cx, cy, rx, ry, color, w = 1, extra = '') =>
    path(`M${cx} ${cy - ry}A${rx} ${ry} 0 0 1 ${cx} ${cy + ry}`, color, w, extra);
const edge = (rx, ry, dy) => rx * Math.sqrt(Math.max(0, 1 - (dy * dy) / (ry * ry)));

const NAVY = '#00006a';
const CYAN = '#5fc4f0';
const PINK = '#c424d8';
const YELLOW = '#ffff00';
const GRID = '#7c878f';

function grid(cx, cy, step, top) {
    let out = '';
    for (let i = -16; i <= 16; i++) {
        out += line(cx + i * step, top, cx + i * step, 216, GRID, 1, 'opacity=".85"');
        const y = cy + i * step;
        if (y > top) out += line(0, y, 374, y, GRID, 1, 'opacity=".85"');
    }
    return out;
}

function drawTop() {
    let s = grid(187, 108.5, 12.4, 50);
    s += line(187, 0, 187, 216, '#000', 2) + line(187, 108.5, 374, 108.5, '#000', 1.5);
    s += '<circle cx="187" cy="108.5" r="83" fill="none" stroke="#1b2156"/>';
    for (let x = 0; x <= 42; x += 4) s += line(x, 96, x, 121, NAVY);
    for (let y = 96; y <= 121; y += 3) s += line(0, y, 42, y, NAVY);
    s += `<rect x="42" y="93" width="60" height="30" fill="${NAVY}"/>`;
    for (let y = 99; y < 114; y += 3) s += line(42, y, 101, y, '#4a5578', 1, 'stroke-dasharray="1 2"');
    s += '<rect x="102" y="89" width="85" height="38" fill="#14406e"/>';
    for (let y = 93; y < 125; y += 3) s += line(102, y + 0.5, 187, y + 0.5, CYAN);
    s += line(102, 90, 187, 90, CYAN, 3) + line(102, 126, 187, 126, CYAN, 3);
    [102, 111, 120, 130, 139, 150, 159, 167, 175, 181].forEach(x => {
        s += line(x, 89, x, 128, PINK, 2);
    });
    s += '<path d="M187 89A31 19.5 0 0 1 187 128z" fill="#35558c"/>';
    for (let i = 0; i < 13; i++) {
        const a = (-90 + i * 15) * Math.PI / 180;
        s += line(188, 108.5, 187 + 31 * Math.cos(a), 108.5 + 19 * Math.sin(a), i % 2 ? NAVY : PINK);
    }
    [12, 18, 24, 28].forEach(r => { s += arc(187, 108.5, r, r * 0.62, '#6a5ad8', 1); });
    s += arc(187, 108.5, 30, 18, CYAN, 3) + arc(187, 108.5, 30, 18, PINK, 3, 'stroke-dasharray="2 4"');
    s += line(187.5, 87, 187.5, 129, YELLOW, 3);
    s += '<text x="17" y="193" fill="#1ce81c">y</text><text x="30" y="193" fill="#c81e1e">x</text><text x="17" y="205" fill="#1414c8">z</text>';
    s += line(22, 196, 29, 196, '#7c1414') + '<text class="camera" x="175" y="208">top</text>';
    return s;
}

function drawPersp() {
    let s = '';
    [[117, 124], [136, 140], [163, 166], [200, 204], [98, 107], [86, 92], [76, 81]].forEach((p, i) => {
        s += line(0, p[0], 374, p[1], GRID, 1, `opacity="${i > 3 ? 0.35 : 0.85}"`);
    });
    [[145, 216, 173, 80], [231, 216, 207, 72], [318, 216, 236, 66], [374, 190, 262, 64], [374, 148, 290, 64], [0, 189, 77, 114], [0, 138, 30, 114], [374, 120, 300, 66]].forEach((p, i) => {
        s += line(...p, GRID, 1, `opacity="${i > 2 ? 0.6 : 0.85}"`);
    });
    s += line(60, 216, 125, 103, '#000', 2) + line(200, 67, 374, 69, '#000', 1.5);
    s += path('M210 41C290 48 367 68 367 90C367 115 290 140 217 147C140 156 60 156 0 147', '#171d5c');
    // inner cloth
    s += '<rect x="0" y="25" width="150" height="84" fill="#0a0a60" opacity=".45"/>';
    for (let i = 0; i < 30; i++) {
        const y = 25 + i * 2.9;
        s += line(0, y, 150, y, '#000068', 2, `stroke-dasharray="${14 + (i * 7) % 17} ${1 + i % 3} ${5 + i % 4} 1"`);
    }
    [26, 28, 33, 38, 41, 43].forEach(r => { s += arc(146, 67, r, 43, '#000060', 2, 'stroke-dasharray="5 1"'); });
    for (let y = 32; y < 104; y += 5) s += line(150, y, 146 + edge(43, 43, y - 67), y, '#000060');
    // outer shape
    for (let i = 0; i <= 18; i++) {
        const dy = -47 * Math.cos(i * Math.PI / 18);
        s += line(0, 67 + dy, 147, 67 + dy, CYAN, i < 2 || i > 16 ? 3 : 1);
        s += line(147, 67 + dy, 147 + edge(75, 47, dy), 67 + dy, CYAN, 1, 'stroke-dasharray="9 1"');
    }
    [10, 38, 64, 87, 108, 126].forEach(x => {
        const d = `M${x + 20} 20C${x - 5} 30 ${x - 5} 104 ${x + 20} 114`;
        s += path(d, '#8f7ce8') + path(d, PINK, 1.5, 'stroke-dasharray="2 5"');
    });
    [22, 46, 60, 68, 74].forEach(r => {
        s += arc(147, 67, r, 47, '#8ab0f0') + arc(147, 67, r, 47, PINK, 1.5, 'stroke-dasharray="3 5"');
    });
    s += `<ellipse cx="147" cy="67" rx="5" ry="47" fill="none" stroke="${YELLOW}" stroke-width="2"/>`;
    s += `<ellipse cx="147" cy="67" rx="5" ry="47" fill="none" stroke="${YELLOW}" stroke-width="4" stroke-dasharray="3 4"/>`;
    s += '<text x="17" y="182" fill="#1ce81c">y</text><text x="30" y="193" fill="#c81e1e">x</text><text x="17" y="197" fill="#1414c8">z</text>';
    s += line(20.5, 184, 20.5, 192, '#2a8a2a') + line(24, 196, 31, 196, '#7c1414');
    return s + '<text class="camera" x="168" y="209">persp</text>';
}

function drawFront() {
    let s = '';
    [17, 69, 170, 220, 270, 321, 371].forEach(x => { s += line(x + 0.5, 50, x + 0.5, 216, GRID, 1, 'opacity=".7"'); });
    [55, 155, 205].forEach(y => { s += line(0, y + 0.5, 374, y + 0.5, GRID, 1, 'opacity=".7"'); });
    s += line(119, 0, 119, 216, '#000', 2) + line(119, 104.5, 374, 104.5, '#05083a', 2);
    // cloth inside
    s += '<rect x="0" y="45" width="118" height="118" fill="#23285c" opacity=".45"/>';
    [11, 20, 23, 36, 38, 47, 56, 66, 76, 79, 85, 92, 103, 109, 113, 116].forEach((x, i) => {
        s += line(x + 0.5, i % 3 ? 50 : 35, x + 0.5, i % 3 ? 162 : 173, NAVY, i % 4 ? 1 : 2, 'opacity=".8"');
    });
    [35, 46, 48, 54, 57, 62, 65, 72, 75, 82, 88, 94, 104, 112, 121, 132, 136, 143, 146, 154, 159, 162, 173].forEach((y, i) => {
        s += line(0, y + 0.5, 119, y + 0.5, NAVY, i % 5 === 1 ? 2 : 1);
    });
    [22, 42, 56, 63, 71, 74].forEach(r => { s += arc(120, 104.5, r, 69, '#0d125e', 1); });
    s += arc(120, 104.5, 60, 66, '#05055c', 3, 'stroke-dasharray="5 8"') + arc(120, 104.5, 72, 68, '#05055c', 3, 'stroke-dasharray="5 8"');
    [46, 55, 62, 72, 82, 94, 117, 126, 136, 146].forEach(y => {
        s += line(120, y, 120 + edge(73, 69, y - 104.5), y, NAVY);
    });
    // outer shape
    const rows = [27, 30, 35, 41, 49, 59, 69, 81, 92, 104, 117, 128, 140, 150, 160, 167, 173, 179, 182];
    const cols = [8, 42, 72, 99];
    const rings = [40, 74, 101, 119, 125];
    let points = '';
    rows.forEach(y => {
        const dy = y - 104.5;
        if (y !== 104) s += line(0, y + 0.5, 120 + edge(125, 78, dy), y + 0.5, CYAN);
        cols.forEach(x => { points += `<rect x="${x - 1}" y="${y - 1}" width="3" height="2" fill="${PINK}"/>`; });
        rings.forEach(r => { points += `<rect x="${119 + edge(r, 78, dy)}" y="${y - 1}" width="2" height="2" fill="${PINK}"/>`; });
    });
    cols.forEach(x => { s += line(x + 0.5, 27, x + 0.5, 183, '#7ab4f0'); });
    rings.forEach(r => { s += arc(120, 104.5, r, 78, '#7cbcf0'); });
    s += points + line(120.5, 26, 120.5, 184, '#9ad0e8');
    rows.forEach(y => { s += `<rect x="119" y="${y - 1}" width="3" height="4" fill="${YELLOW}"/>`; });
    s += '<text x="17" y="181" fill="#1ce81c">y</text><text x="30" y="193" fill="#c81e1e">x</text>';
    s += line(20.5, 186, 20.5, 196, '#1414c8', 3, 'stroke-dasharray="2 1"') + line(22, 196, 31, 196, '#7c1414');
    s += '<text class="camera" x="172" y="208">front</text>';
    // mouse pointer
    s += '<path d="M196 173v14l3-3 3 6 3-1-3-6h4z" fill="#fff" stroke="#222" stroke-width=".5"/>';
    return s;
}

function drawSide() {
    let s = grid(186, 108.5, 12.4, 48);
    s += line(186, 0, 186, 216, '#000', 2) + line(0, 108.5, 374, 108.5, '#000', 1.5) + line(120, 108.5, 260, 108.5, '#08085a');
    s += '<circle cx="186" cy="108.5" r="18" fill="#12125e"/>';
    for (let d = -15; d <= 15; d += 4) {
        const e = edge(17, 17, d);
        s += line(186 - e, 108.5 + d, 186 + e, 108.5 + d, '#6a8cf0');
    }
    [0, 5, 9, 13, 16].forEach(r => {
        s += `<ellipse cx="186" cy="108.5" rx="${r}" ry="17" fill="none" stroke="#a03ae0"/>`;
    });
    s += line(186, 92, 186, 125, PINK, 1.5);
    s += `<circle cx="186" cy="108.5" r="19" fill="none" stroke="${YELLOW}" stroke-width="3"/>`;
    s += '<text x="17" y="181" fill="#1ce81c">y</text><text x="5" y="193" fill="#1414c8">z</text><text x="17" y="193" fill="#a8401e">x</text>';
    s += line(20.5, 184, 20.5, 195, '#c0a020') + line(9, 196, 20, 196, '#2020b0');
    return s + '<text class="camera" x="174" y="209">side</text>';
}

const views = { top: drawTop, persp: drawPersp, front: drawFront, side: drawSide };

document.querySelectorAll('[data-view]').forEach(el => {
    el.innerHTML = `<nav class="menu">${menuHtml(menuNames)}</nav>
        <div class="panel-icons">${iconHtml(panelIcons)}</div>
        <svg class="view" viewBox="0 0 374 216" preserveAspectRatio="xMidYMid slice">${views[el.dataset.view]()}</svg>`;
});

document.querySelectorAll('[data-menu]').forEach(el => { el.innerHTML = menuHtml(el.dataset.menu); });
document.querySelectorAll('[data-icons]').forEach(el => { el.innerHTML = iconHtml(el.dataset.icons); });
document.querySelectorAll('[data-tabs]').forEach(el => {
    el.insertAdjacentHTML('afterbegin', el.dataset.tabs.split(',').map(name =>
        `<button type="button" class="tab${name.endsWith('*') ? ' on' : ''}">${name.replace('*', '')}</button>`).join(''));
});

// time slider ticks: every 20 frames up to 100, then every 40
const frames = [0, 20, 40, 60, 80, 100];
for (let f = 140; f < 1000; f += 40) frames.push(f);
document.getElementById('timeline').innerHTML = frames.map(f => {
    const x = (0.5 + f * 0.099).toFixed(2) + '%';
    return `<rect x="${x}" y="11" width="2" height="12" fill="#111"/><text x="${x}" y="8">${f}</text>`;
}).join('') + '<text class="now" x="0.7%" y="20">1</text>';
```
